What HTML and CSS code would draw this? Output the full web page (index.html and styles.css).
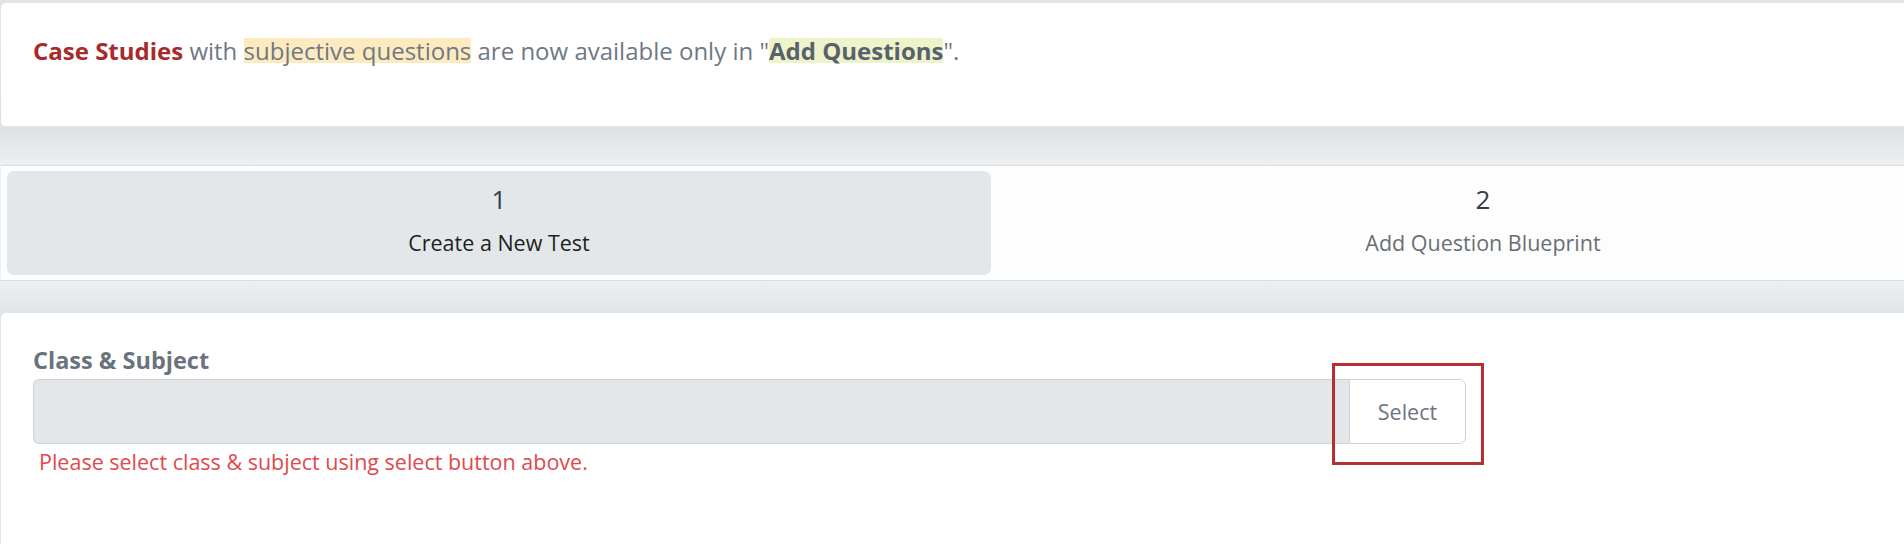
FILE: index.html
```html
<!DOCTYPE html>
<html lang="en">
<head>
<meta charset="utf-8">
<title>Create Test</title>
<link rel="stylesheet" href="styles.css">
</head>
<body>
<div class="page">
  <section class="card notice">
    <p class="notice-text"><strong class="hl-red">Case Studies</strong> with <span class="hl-yellow">subjective questions</span> are now available only in "<strong class="hl-green">Add Questions</strong>".</p>
  </section>

  <section class="card steps">
    <div class="step active">
      <div class="step-num">1</div>
      <div class="step-label">Create a New Test</div>
    </div>
    <div class="step">
      <div class="step-num">2</div>
      <div class="step-label">Add Question Blueprint</div>
    </div>
  </section>

  <section class="card form">
    <label class="field-label">Class &amp; Subject</label>
    <div class="input-group">
      <div class="input-field"></div>
      <button class="select-btn" type="button">Select</button>
    </div>
    <div class="field-error">Please select class &amp; subject using select button above.</div>
    <div class="annotation"></div>
  </section>
</div>
</body>
</html>
```
FILE: styles.css
```css
html, body {
  margin: 0;
  padding: 0;
}
body {
  width: 1904px;
  height: 544px;
  overflow: hidden;
  font-family: "Open Sans", "Noto Sans", Arial, sans-serif;
  background: linear-gradient(to bottom,
    #e0e4e7 0px, #e0e4e7 3px,
    #dde1e4 127px, #ecf0f3 165px,
    #ecf0f3 281px, #e1e5e8 313px);
}
.page {
  width: 1980px;
  padding-top: 3px;
  padding-left: 1px;
}
.card {
  background: #ffffff;
  border-radius: 5px;
}
.notice {
  height: 124px;
  box-sizing: border-box;
  padding: 35px 32px 0;
  border-bottom: 1px solid #e3e6e9;
}
.notice-text {
  margin: 0;
  font-size: 24px;
  line-height: 25px;
  color: #6f7884;
}
.hl-red {
  color: #a82a2a;
  font-weight: 700;
}
.hl-yellow {
  display: inline-block;
  line-height: 25px;
  background: #fdebbf;
}
.hl-green {
  display: inline-block;
  line-height: 25px;
  background: #eef4c9;
  color: #58626d;
  font-weight: 700;
}
.steps {
  margin-top: 38px;
  height: 116px;
  box-sizing: border-box;
  border-top: 1px solid #d9dcdf;
  border-bottom: 1px solid #d9dcdf;
  border-radius: 0;
  background: #fdfdfd;
  padding: 5px 6px;
  display: grid;
  grid-template-columns: 984px 1fr;
}
.step {
  text-align: center;
  border-radius: 7px;
  padding-top: 13px;
}
.step.active {
  background: #e3e7ea;
}
.step-num {
  font-size: 26px;
  line-height: 30px;
  color: #333c48;
}
.step-label {
  margin-top: 17px;
  font-size: 21.5px;
  line-height: 24px;
  color: #6a6f75;
}
.step.active .step-label {
  color: #1e1e1e;
}
.form {
  position: relative;
  margin-top: 32px;
  height: 300px;
  padding: 35px 32px 0;
}
.field-label {
  display: block;
  font-size: 23.5px;
  line-height: 24px;
  font-weight: 700;
  color: #6a737d;
}
.input-group {
  margin-top: 7px;
  display: flex;
  width: 1433px;
  height: 65px;
}
.input-field {
  flex: 1;
  background: #e3e7ea;
  border: 1px solid #cdd3d9;
  border-right: none;
  border-radius: 6px 0 0 6px;
}
.select-btn {
  width: 117px;
  background: #ffffff;
  border: 1px solid #cdd3d9;
  border-radius: 0 7px 7px 0;
  font-family: "Open Sans", "Noto Sans", Arial, sans-serif;
  font-size: 21.5px;
  color: #6c7480;
  padding: 0;
}
.field-error {
  margin-top: 8px;
  padding-left: 6px;
  font-size: 21.5px;
  line-height: 20px;
  color: #e04a4d;
}
.annotation {
  position: absolute;
  left: 1331px;
  top: 50px;
  width: 146px;
  height: 96px;
  border: 3px solid #b3302f;
}
```
